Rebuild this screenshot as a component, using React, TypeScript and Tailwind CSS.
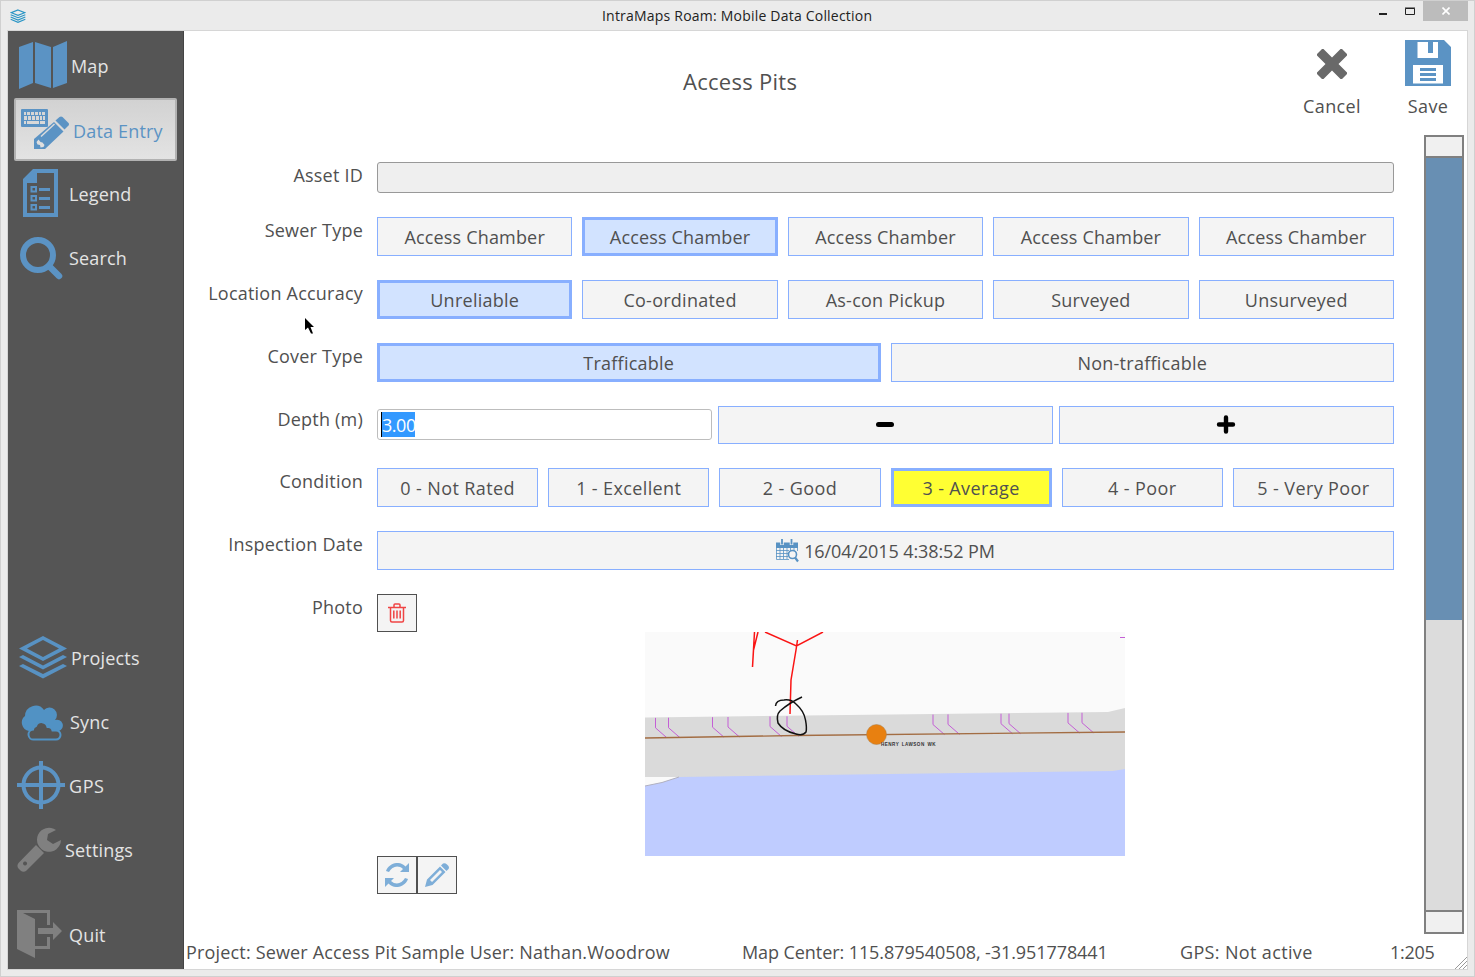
import React from 'react';

const BLUE = '#5892c3';
const ICON_BLUE = '#5b93c4';

function LogoIcon() {
  return (
    <svg width="16" height="14" viewBox="0 0 48 42" fill="none" stroke="#2a95c5" strokeWidth="3.500">
      <path d="M24 3 44 11 24 19 4 11Z" />
      <path d="M2 17 24 26 46 17M2 24 24 33 46 24M2 31 24 40 46 31" />
    </svg>
  );
}

function MapIcon() {
  return (
    <svg width="48" height="48" viewBox="0 0 48 48" fill={ICON_BLUE}>
      <path d="M0 6 14 1V42L0 48ZM16 1 32 6V47L16 42ZM34 6 48 0V42L34 47Z" />
    </svg>
  );
}

function DataEntryIcon() {
  return (
    <svg width="48" height="42" viewBox="0 0 48 42" fill={ICON_BLUE}>
      <path fillRule="evenodd" d="M1 0H26a1 1 0 0 1 1 1V17a1 1 0 0 1-1 1H1a1 1 0 0 1-1-1V1a1 1 0 0 1 1-1ZM3 3V6H5V3ZM6 3V6H9V3ZM10 3V6H13V3ZM14 3V6H17V3ZM18 3V6H20V3ZM21 3V6H24V3ZM3 7V11H6V7ZM7 7V11H10V7ZM11 7V11H14V7ZM15 7V11H18V7ZM19 7V11H21V7ZM22 7V11H24V7ZM3 12V15H5V12ZM6 12V15H18V12ZM19 12V15H24V12Z" />
      <path d="M34.500 11.500 43.500 20.500 47.500 16.500A2 2 0 0 0 47.500 14L41.500 8A2.500 2.500 0 0 0 38.500 8Z" />
      <path fillRule="evenodd" d="M33 13 42.500 22.500 24 40H13V30ZM17.500 30.500 15.500 33 16.500 35.500 19 36 19.500 38.500 22.500 38 23.500 36 21.500 33.500 19.500 33ZM20.500 28 34 15.500 33 14.500 19.500 27Z" />
    </svg>
  );
}

function LegendIcon() {
  return (
    <svg width="35" height="48" viewBox="0 0 35 48">
      <path fill={ICON_BLUE} fillRule="evenodd" d="M10 0H35V48H0V10ZM14 4V14H4V44H31V4Z" />
      <g fill="none" stroke={ICON_BLUE} strokeWidth="2">
        <path d="M8.500 18H13V22.500H8.500ZM8.500 27H13V31.500H8.500ZM8.500 36H13V40.500H8.500Z" />
        <path strokeWidth="3" d="M16 20.500H27M16 29.500H27M16 38.500H27" />
      </g>
    </svg>
  );
}

function SearchIcon() {
  return (
    <svg width="43" height="45" viewBox="0 -2 43 45" fill="none" stroke={ICON_BLUE}>
      <circle cx="18" cy="18" r="15" strokeWidth="6" />
      <path d="M29 29 39 39" strokeWidth="6.500" strokeLinecap="round" />
    </svg>
  );
}

function ProjectsIcon() {
  return (
    <svg width="48" height="43" viewBox="0 0 48 43" fill={BLUE}>
      <path fillRule="evenodd" d="M24 0 48 12.500 24 25 0 12.500ZM24 4 8 12.500 24 21 40 12.500Z" />
      <path d="M0 21 4 19 24 29.500 44 19 48 21 24 33.500ZM0 30 4 28 24 38 44 28 48 30 24 42.500Z" />
    </svg>
  );
}

function SyncIcon() {
  return (
    <svg width="44" height="40" viewBox="0 -2 44 40">
      <path fill="#5192c4" d="M8 28A8.500 8.500 0 0 1 4 13 10.500 10.500 0 0 1 23 7 6.500 6.500 0 0 1 34 17 5.800 5.800 0 1 1 38 28L33 29Z" />
      <path fill="#555" stroke="#5192c4" strokeWidth="2" d="M13 36.500a5 5 0 0 1-1-10 4 4 0 0 1 3-3.500 6 6 0 0 1 11.500 1 4.500 4.500 0 0 1 5 3.500H35a4.500 4.500 0 0 1 0 9Z" />
    </svg>
  );
}

function GpsIcon() {
  return (
    <svg width="48" height="48" viewBox="0 0 48 48" fill="none" stroke={ICON_BLUE} strokeWidth="4">
      <circle cx="24" cy="24" r="17.500" />
      <path d="M24 0V48M0 24H48" />
    </svg>
  );
}

function WrenchIcon() {
  return (
    <svg width="44" height="45" viewBox="0 0 44 45" fill="#808080">
      <path d="M39 3A12 12 0 1 0 44 13L36 17 30 13 31 7Z" />
      <path fillRule="evenodd" d="M19 18 27 26 9.500 43.500A4.500 4.500 0 0 1 3.500 43.500L1.500 41.500A4.500 4.500 0 0 1 1.500 36ZM8 34.500a2 2 0 1 0 .1 0Z" />
    </svg>
  );
}

function QuitIcon() {
  return (
    <svg width="45" height="48" viewBox="0 0 45 48" fill="#808080">
      <path d="M0 0H33V15H30V3H6L18 9V48L0 39ZM30 27H33V39H18V36H30Z" />
      <path d="M21 18H36V12L45 21 36 30V24H21Z" />
    </svg>
  );
}

function SaveIcon() {
  return (
    <svg width="46" height="46" viewBox="0 0 46 46" fill={ICON_BLUE}>
      <path fillRule="evenodd" d="M0 0H39L46 7V46H0ZM12.500 2V18H33V2H28V13H23V2ZM8 25V43.500H38V25Z" />
      <path d="M15 28H31V31H15ZM15 33H31V36H15ZM15 38H31V41H15Z" />
    </svg>
  );
}

function CancelIcon() {
  return (
    <svg width="30" height="30" viewBox="0 0 30 30" fill="#696969">
      <path d="M6.500 0 15 8.500 23.500 0H25L30 5V6.500L21.500 15 30 23.500V25L25 30H23.500L15 21.500 6.500 30H5L0 25V23.500L8.500 15 0 6.500V5L5 0Z" />
    </svg>
  );
}

function CalendarIcon() {
  return (
    <svg className="mt-px" width="23" height="24" viewBox="0 0 23 24" fill="none" stroke="#5892c3">
      <path fill="#5892c3" stroke="none" d="M0 3.500H22V9H0Z" />
      <path strokeOpacity=".8" d="M.5 9V20.500H13M21.500 9V12M4 9V20M7.500 9V20M11 9V20M14.500 9V13M18 9V12M0 11.500H13M0 14.500H12M0 17.500H12" />
      <path d="M6 0V6M15.500 0V6" stroke="#f4f4f4" strokeWidth="3.500" />
      <path d="M6 0V5.500M15.500 0V5.500" strokeWidth="1.800" />
      <circle cx="16.500" cy="15.500" r="4" strokeWidth="1.600" fill="#f4f4f4" />
      <path d="M19 18.500 22 22.500" strokeWidth="2.200" />
    </svg>
  );
}

function TrashIcon() {
  return (
    <svg width="18" height="20" viewBox="0 0 18 20" fill="none" stroke="#ef4444" strokeWidth="1.500">
      <path d="M0 4.500H18M6 4V2Q6 1 7 1H11Q12 1 12 2V4M2.500 5V17.500Q2.500 19 4 19H14Q15.500 19 15.500 17.500V5" />
      <path d="M5.800 7.500V15.500M9 7.500V15.500M12.200 7.500V15.500" />
    </svg>
  );
}

function RefreshIcon() {
  return (
    <svg width="24" height="24" viewBox="0 0 24 24" fill="#7eaed8">
      <path d="M1 8C4 0 14-3 20.500 3.500L24 0V9H15L18 6C13 1.500 7 3.500 4 9Z" />
      <path d="M23 16C20 24 10 27 3.500 20.500L0 24V15H9L6 18C11 22.500 17 20.500 20 15Z" />
    </svg>
  );
}

function PencilIcon() {
  return (
    <svg width="24" height="24" viewBox="0 0 24 24" fill="#7eaed8">
      <path fillRule="evenodd" d="M15 3.500 20.500 9 7.500 22 0 24 2 16.500ZM15 7 5 17 7 19 17 9Z" />
      <path d="M16 2.500 18 .5Q20-.5 22 1.500 25 4 23.500 6L21.500 8Z" />
    </svg>
  );
}

const PIPES = [10, 23, 67, 82.5, 124.5, 141.5, 287.5, 302.5, 355.5, 363.5, 422.5, 436.5];

function SitePhoto() {
  return (
    <svg width="480" height="224" viewBox="0 0 480 224">
      <path fill="#fafafa" d="M0 0H480V224H0Z" />
      <path fill="#dadada" d="M0 85.500 463 80 480 76V145H0Z" />
      <path fill="#bfccff" d="M0 154 17 150.500 34 145 468 139 480 137V224H0Z" />
      <path stroke="#b0b0c0" fill="none" d="M0 154 17 150.500 34 145" />
      <g fill="none" stroke="#c45fd6">
        {PIPES.map((x) => (
          <path key={x} transform={`translate(${x} ${86 - x * 0.012})`} d="M.5 0V10L12 20" />
        ))}
        <path d="M475 5.500H480" />
      </g>
      <path d="M0 106 150 103.500 480 100" stroke="#a36d43" strokeWidth="1.300" fill="none" />
      <g fill="none" stroke="#fa1414" strokeWidth="1.500">
        <path d="M109.500 0 107.500 35 108.500 18 113 0M120 0 151.500 14 178 0M152.500 8 151 18 146 48 145 82" />
      </g>
      <path fill="none" stroke="#111" strokeWidth="1.500" d="M130.500 74Q131 68 139 68 146 67 151 72 159 79 160.500 88 162 96 161 100 158 104 151 102 138 99 133 91 131 83 135 79 144 71 157 65" />
      <circle cx="231.500" cy="102.500" r="10" fill="#e88010" stroke="#a98050" strokeWidth=".5" />
      <text x="236" y="113.500" fontSize="4.600" fill="#333" fontWeight="700" fontFamily="Liberation Sans, sans-serif" letterSpacing=".45" wordSpacing="1">HENRY LAWSON WK</text>
    </svg>
  );
}

function Pointer() {
  return (
    <svg className="absolute left-[121px] top-[286px]" width="10" height="18" viewBox="0 0 10 18">
      <path d="M0 1V13L3 10.500 6 16.500H8L5.500 10H9Z" fill="#000" />
    </svg>
  );
}

type NavProps = { icon: React.ReactNode; label: string; className: string };

function NavItem({ icon, label, className }: NavProps) {
  return (
    <div className={`flex items-center text-[#e4e4e4] ${className}`}>
      {icon}
      <span className="pt-[2px]">{label}</span>
    </div>
  );
}

function Field({ label, children }: { label: string; children: React.ReactNode }) {
  return (
    <div className="flex items-start gap-[14px]">
      <div className="w-[179px] shrink-0 whitespace-nowrap text-right leading-[26px] tracking-[0.22px]">{label}</div>
      <div className="w-[1017px]">{children}</div>
    </div>
  );
}

type Choice = { label: string; active?: boolean; yellow?: boolean };

function Choices({ items, cols }: { items: Choice[]; cols: string }) {
  return (
    <div className={`grid gap-[10px] ${cols}`}>
      {items.map((c, i) => (
        <button
          key={i}
          className={`flex h-[39px] items-center justify-center whitespace-nowrap pt-px ${
            c.active ? 'border-3 border-[#88afff]' : 'border border-[#88afff]'
          } ${c.yellow ? 'bg-[#ffff33]' : c.active ? 'bg-[#d2e3ff]' : 'bg-[#f4f4f4]'}`}
        >
          {c.label}
        </button>
      ))}
    </div>
  );
}

export default function App() {
  return (
    <div className="flex h-[977px] w-[1475px] flex-col border border-[#d0d0d0] bg-[#ebebeb] font-['Open_Sans','Noto_Sans',sans-serif] text-[18px] tracking-[0.17px] text-[#505050]">
      <header className="flex h-[29px] shrink-0 items-start">
        <div className="w-[200px] pl-[9px] pt-[8px]"><LogoIcon /></div>
        <div className="flex-1 pl-[401px] pt-[4px] text-[14px] leading-[22px] tracking-[0.21px] text-[#222]">IntraMaps Roam: Mobile Data Collection</div>
        <svg width="45" height="20" viewBox="0 0 45 20" fill="none" stroke="#222">
          <path d="M1 13H9" strokeWidth="2" />
          <path d="M27.500 7.500H36.500V13.500H27.500ZM27 7H37" />
        </svg>
        <div className="mr-[6px] flex h-[20px] w-[45px] items-center justify-center bg-[#bcbcbc]">
          <svg width="8" height="8" viewBox="0 0 8 8" stroke="#fff" strokeWidth="1.600"><path d="M.5 .5 7.500 7.500M7.500 .5 .5 7.500" /></svg>
        </div>
      </header>

      <div className="mx-[6px] flex h-[940px] shrink-0 border border-[#d6d6d6]">
        <nav className="flex w-[176px] shrink-0 flex-col border-r border-[#444] bg-[#555]">
          <NavItem icon={<MapIcon />} label="Map" className="h-[67px] gap-[4px] pl-[11px] pt-px" />
          <div className="ml-[6px] flex h-[63px] w-[163px] items-center gap-[4px] rounded-[2px] border-2 border-[#b2b2b2] bg-linear-to-b from-[#d2d2d2] to-[#e3e3e3] pl-[5px] pt-px text-[#5b93c4]">
            <DataEntryIcon />
            <span className="pt-[2px]">Data Entry</span>
          </div>
          <NavItem icon={<LegendIcon />} label="Legend" className="h-[64px] gap-[11px] pl-[15px]" />
          <NavItem icon={<SearchIcon />} label="Search" className="h-[64px] gap-[6px] pl-[12px]" />
          <div className="flex-1" />
          <NavItem icon={<ProjectsIcon />} label="Projects" className="h-[64px] gap-[4px] pl-[11px]" />
          <NavItem icon={<SyncIcon />} label="Sync" className="h-[64px] gap-[5px] pl-[13px]" />
          <NavItem icon={<GpsIcon />} label="GPS" className="h-[64px] gap-[4px] pl-[9px] tracking-[0.6px]" />
          <NavItem icon={<WrenchIcon />} label="Settings" className="h-[64px] gap-[4px] pl-[9px]" />
          <NavItem icon={<QuitIcon />} label="Quit" className="mb-[3px] mt-[21px] h-[64px] gap-[7px] pl-[9px]" />
        </nav>

        <main className="relative flex w-[1283px] flex-col bg-white">
          <div className="flex h-[104px] shrink-0">
            <h1 className="flex-1 pl-[499px] pt-[37px] text-[22px] leading-[26px] tracking-[0.28px]">Access Pits</h1>
            <div className="flex w-[96px] flex-col items-center pt-[18px]">
              <CancelIcon />
              <span className="mt-[14px] leading-[26px] tracking-[0.35px]">Cancel</span>
            </div>
            <div className="mr-[-9px] flex w-[96px] flex-col items-center pt-[9px]">
              <SaveIcon />
              <span className="mt-[7px] leading-[26px] tracking-[0.35px]">Save</span>
            </div>
          </div>

          <div className="flex h-[799px] shrink-0">
            <div className="flex w-[1240px] flex-col gap-[24px] pt-[27px]">
              <Field label="Asset ID">
                <div className="h-[31px] rounded-[3px] border border-[#999] bg-[#efefef]" />
              </Field>
              <Field label="Sewer Type">
                <Choices cols="grid-cols-5" items={[{ label: 'Access Chamber' }, { label: 'Access Chamber', active: true }, { label: 'Access Chamber' }, { label: 'Access Chamber' }, { label: 'Access Chamber' }]} />
              </Field>
              <Field label="Location Accuracy">
                <Choices cols="grid-cols-5 tracking-[0.25px]" items={[{ label: 'Unreliable', active: true }, { label: 'Co-ordinated' }, { label: 'As-con Pickup' }, { label: 'Surveyed' }, { label: 'Unsurveyed' }]} />
              </Field>
              <Field label="Cover Type">
                <Choices cols="grid-cols-2 tracking-[0.25px]" items={[{ label: 'Trafficable', active: true }, { label: 'Non-trafficable' }]} />
              </Field>
              <Field label="Depth (m)">
                <div className="grid h-[38px] grid-cols-3 items-start gap-[6px]">
                  <div className="mt-[3px] flex h-[31px] items-center rounded-[3px] border border-[#bdbdbd] bg-white pl-[3px]">
                    <span className="h-[25px] w-[34px] border-l border-black bg-[#3399ff] leading-[26px] tracking-[-0.45px] text-white">3.00</span>
                  </div>
                  <button className="flex h-[38px] items-center justify-center border border-[#88afff] bg-[#f4f4f4] pr-px">
                    <svg width="20" height="20" viewBox="0 0 20 20"><path d="M3.500 9.500H16.500" stroke="#000" strokeWidth="5" strokeLinecap="round" /></svg>
                  </button>
                  <button className="flex h-[38px] items-center justify-center border border-[#88afff] bg-[#f4f4f4] pr-px">
                    <svg width="20" height="20" viewBox="0 0 20 20"><path d="M3 9.500H17M10 2.500V16.500" stroke="#000" strokeWidth="4.400" strokeLinecap="round" /></svg>
                  </button>
                </div>
              </Field>
              <Field label="Condition">
                <Choices cols="grid-cols-6 tracking-[0.38px]" items={[{ label: '0 - Not Rated' }, { label: '1 - Excellent' }, { label: '2 - Good' }, { label: '3 - Average', active: true, yellow: true }, { label: '4 - Poor' }, { label: '5 - Very Poor' }]} />
              </Field>
              <Field label="Inspection Date">
                <button className="flex h-[39px] w-full items-center justify-center gap-[5px] border border-[#88afff] bg-[#f4f4f4]">
                  <CalendarIcon />
                  <span className="pt-px tracking-[-0.1px]">16/04/2015 4:38:52 PM</span>
                </button>
              </Field>
              <Field label="Photo">
                <div className="flex flex-col">
                  <button className="flex h-[38px] w-[40px] items-center justify-center border border-[#505050] bg-[#f4f4f4]"><TrashIcon /></button>
                  <div className="ml-[268px]"><SitePhoto /></div>
                  <div className="flex">
                    <button className="flex h-[38px] w-[40px] items-center justify-center border border-[#505050] bg-[#f4f4f4]"><RefreshIcon /></button>
                    <button className="flex h-[38px] w-[40px] items-center justify-center border border-[#505050] bg-[#f4f4f4]"><PencilIcon /></button>
                  </div>
                </div>
              </Field>
            </div>
            <div className="flex w-[40px] flex-col border-2 border-[#808080]">
              <div className="h-[21px] border-b-2 border-[#808080] bg-[#f0f0f0]" />
              <div className="h-[462px] bg-[#688fb3]" />
              <div className="flex-1 bg-[#dcdcdc]" />
              <div className="h-[22px] border-t-2 border-[#808080] bg-[#f0f0f0]" />
            </div>
          </div>

          <footer className="flex flex-1 whitespace-nowrap pt-[5px] leading-[26px]">
            <span className="w-[556px] pl-[2px]">Project: Sewer Access Pit Sample User: Nathan.Woodrow</span>
            <span className="w-[438px] pl-[2px] tracking-[-0.08px]">Map Center: 115.879540508, -31.951778441</span>
            <span className="w-[211px] pl-[2px] tracking-[0.35px]">GPS: Not active</span>
            <span className="w-[66px] pl-px tracking-[-0.3px]">1:205</span>
            <svg className="mt-[18px]" width="12" height="12" viewBox="0 0 12 12" stroke="#999"><path d="M0 12 12 0M4 12 12 4M8 12 12 8" /></svg>
          </footer>
          <Pointer />
        </main>
      </div>
    </div>
  );
}
